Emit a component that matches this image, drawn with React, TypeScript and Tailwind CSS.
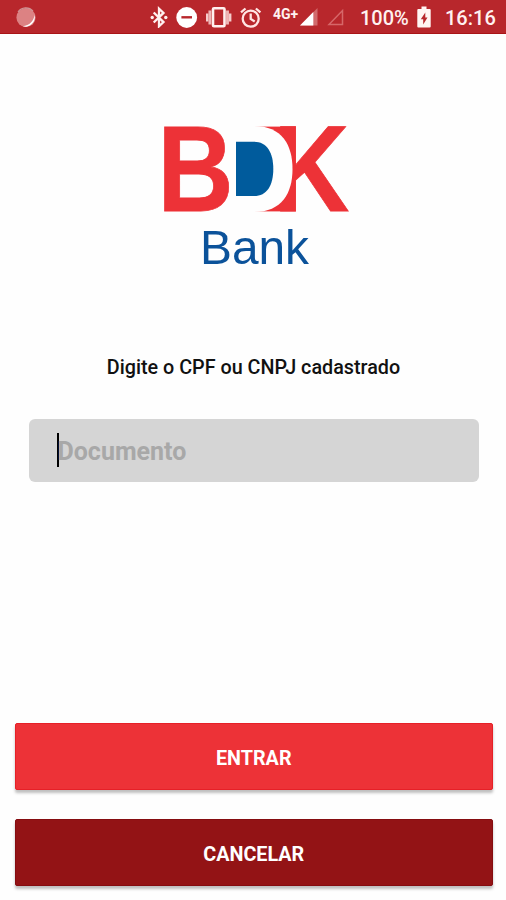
function StatusBar() {
  return (
    <header className="flex h-[34px] items-center border-b border-[#a91417] bg-[#b8272c] text-[20px] font-medium text-[#fff1f0]">
      <svg className="ml-[15px] shrink-0" width="22" height="22" viewBox="0 0 22 22">
        <circle cx="11" cy="11.5" r="9.6" fill="#dc8283" />
        <path d="M3 6A9.6 9.6 0 0 1 18 5" fill="none" stroke="#cf9595" strokeWidth="1.2" />
        <path d="M19.6 9A9.6 9.6 0 0 1 7.500 20.3C15 19.500 18.500 15 19.6 9Z" fill="#fff" />
      </svg>
      <svg className="ml-[113px] shrink-0" width="18" height="22" viewBox="0 0 18 22" fill="none" stroke="#fff0ef" strokeWidth="2.3">
        <path d="M3.7 6.500 13.5 16.100 9 20.3V2.7L13.5 6.900 3.7 16.500" />
        <circle cx="2.2" cy="11.500" r="1.7" fill="#fff0ef" stroke="none" />
        <circle cx="15.8" cy="11.500" r="1.7" fill="#fff0ef" stroke="none" />
      </svg>
      <svg className="ml-[8px] shrink-0" width="22" height="22" viewBox="0 0 22 22">
        <circle cx="10.700" cy="11.5" r="10.4" fill="#fff" />
        <path d="M5.4 11.300h10.6" stroke="#b8272c" strokeWidth="2.4" />
      </svg>
      <svg className="ml-[8px] shrink-0" width="26" height="22" viewBox="0 0 26 22" fill="none">
        <rect x="7" y="2.300" width="11.500" height="18" rx="1" stroke="#fff0ef" strokeWidth="2.6" />
        <path d="M3.900 4.500v14M21.500 4.500v14" stroke="#efb5b5" strokeWidth="2.9" />
        <path d="M1.200 7.500v8M24.200 7.500v8" stroke="#f4cccb" strokeWidth="2.4" />
      </svg>
      <svg className="ml-[8px] shrink-0" width="22" height="22" viewBox="0 0 22 22" fill="none" stroke="#ffe5e3" strokeWidth="2.3">
        <circle cx="10.700" cy="12.700" r="8" />
        <path d="M10.700 7.500v5.4l4 2.500M1 6.4l4.5-3.9M20.4 6.4l-4.5-3.9" />
      </svg>
      <span className="-mt-[6px] ml-[11px] w-[27px] text-[14px] leading-[14px] font-bold tracking-[-0.1px]">4G+</span>
      <svg className="shrink-0" width="18" height="18" viewBox="0 0 18 18">
        <path d="M17.5 0v17.500H0Z" fill="#d16a6c" />
        <path d="M13.3 4v13.500H0Z" fill="#fff" />
      </svg>
      <svg className="ml-[9px] shrink-0" width="18" height="18" viewBox="0 0 18 18" fill="none">
        <path d="M15.500 2.500v14H2Z" stroke="#d66769" strokeWidth="1.5" />
      </svg>
      <span className="mt-[3px] ml-[15px] w-[48px] leading-6">100%</span>
      <svg className="ml-[9px] shrink-0" width="14" height="22" viewBox="0 0 14 22">
        <path d="M4.5 0.500h5v2.5h3.2a1 1 0 0 1 1 1V20.500a1 1 0 0 1-1 1H1.3a1 1 0 0 1-1-1V4a1 1 0 0 1 1-1h3.200Z" fill="#fff5f3" />
        <path d="M8.300 6.500 3.800 13.300H6.200V18.500L10.500 11.400H8.300Z" fill="#b8272c" />
      </svg>
      <span className="mt-[3px] ml-[14px] leading-6">16:16</span>
    </header>
  );
}

function Logo() {
  return (
    <svg className="ml-[150px] mt-[81px] shrink-0 overflow-visible" width="210" height="160" viewBox="150 115 210 160" role="img" aria-label="BDK Bank">
      <g fill="#ed3237" fontFamily="Liberation Sans, Arial, sans-serif" fontWeight="700" fontSize="122">
        <text transform="translate(157.500 211) scale(.863 1)" stroke="#ed3237" strokeWidth="0.800">B</text>
        <text transform="translate(273.4 211) scale(.86 1)" stroke="#ed3237" strokeWidth="0.800">K</text>
        <rect x="255" y="126.600" width="40.700" height="84.800" />
      </g>
      <path d="M254 126C282 126 292.500 145 292.500 169S282 212 254 212Z" fill="#fefefe" />
      <path d="M236 141.700h18c13 0 19.300 11 19.300 27.200S267 196 254 196H236Z" fill="#005b9c" />
      <text x="200" y="264" textLength="109" lengthAdjust="spacingAndGlyphs" fill="#0b529a" fontFamily="Liberation Sans, Arial, sans-serif" fontSize="48.500">Bank</text>
    </svg>
  );
}

export default function App() {
  return (
    <main className="flex h-[900px] w-full flex-col bg-[#fefefe] font-['Roboto',sans-serif]">
      <StatusBar />
      <Logo />
      <p className="mt-[80px] ml-[1px] text-center text-[19.75px] leading-[26px] font-medium text-[#111]">Digite o CPF ou CNPJ cadastrado</p>
      <div className="mr-[27px] ml-[28.5px] mt-[38px] flex h-[63px] shrink-0 items-center rounded-[6px] bg-[#d5d5d5] pl-[28px]">
        <span className="-mt-[2px] h-[34px] w-[2px] bg-black" />
        <span className="mt-[2px] -ml-[1px] text-[25px] leading-8 font-bold text-[#a8a8a8]">Documento</span>
      </div>
      <div className="mr-[13px] ml-[14.5px] mt-auto mb-[14px] flex flex-col gap-[29px] text-[19.75px] font-bold text-white">
        <button className="h-[67px] rounded-[2px] border border-[#e62027] bg-[#ed3237] pt-[5px] shadow-[0_3px_3px_rgba(0,0,0,0.25)]">ENTRAR</button>
        <button className="h-[67px] rounded-[2px] border border-[#850c10] bg-[#931315] pt-[5px] shadow-[0_3px_3px_rgba(0,0,0,0.25)]">CANCELAR</button>
      </div>
    </main>
  );
}
